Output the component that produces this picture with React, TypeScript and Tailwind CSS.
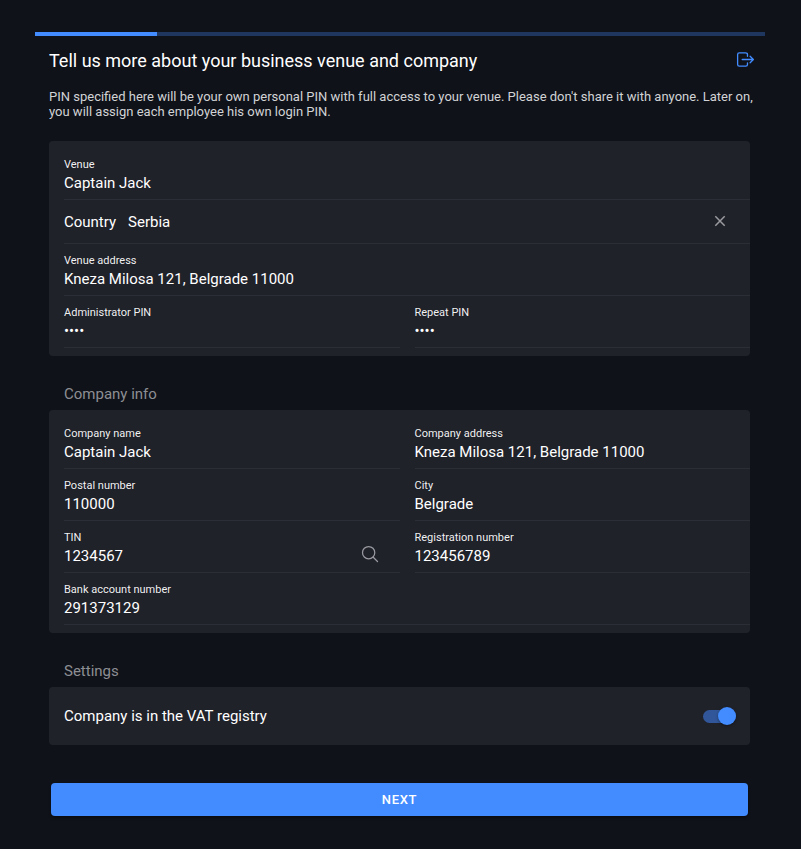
import { useId, useState, type ReactNode } from "react";
import { IoLogOutOutline, IoSearchOutline } from "react-icons/io5";

const STEP = 1;
const TOTAL_STEPS = 6;

interface FieldProps {
  label: string;
  defaultValue: string;
  type?: "text" | "password";
  wide?: boolean;
  action?: ReactNode;
}

function Field({ label, defaultValue, type = "text", wide, action }: FieldProps) {
  const id = useId();

  return (
    <div className={wide ? "col-span-2 pl-[15px]" : "pl-[15px]"}>
      <div className="flex items-end border-b border-[#2b2e36] pt-[9px] pb-1.5">
        <div className="min-w-0 flex-1">
          <label htmlFor={id} className="block text-[11px] leading-4 text-white/95">
            {label}
          </label>
          <input
            id={id}
            type={type}
            defaultValue={defaultValue}
            className="block h-5 w-full bg-transparent text-[15px] leading-5 text-white outline-none"
          />
        </div>
        {action}
      </div>
    </div>
  );
}

function CountryField() {
  const id = useId();
  const [country, setCountry] = useState("Serbia");

  return (
    <div className="col-span-2 pl-[15px]">
      <div className="flex h-11 items-center border-b border-[#2b2e36]">
        <label htmlFor={id} className="text-[15px] leading-5">
          Country
        </label>
        <select
          id={id}
          value={country}
          onChange={(e) => setCountry(e.target.value)}
          className="ml-3 min-w-0 flex-1 appearance-none bg-transparent text-[15px] leading-5 outline-none"
        >
          <option value="" />
          <option value="Serbia">Serbia</option>
        </select>
        <button
          type="button"
          aria-label="Clear country"
          onClick={() => setCountry("")}
          className="mr-5 pb-0.5 text-[#9a9ba0]"
        >
          <svg width="20" height="20" viewBox="0 0 20 20" fill="none" stroke="currentColor" strokeWidth="1.5">
            <path d="M5.3 5.3l9.4 9.4M14.7 5.3l-9.4 9.4" />
          </svg>
        </button>
      </div>
    </div>
  );
}

function Card({ children }: { children: ReactNode }) {
  return <div className="grid grid-cols-2 rounded-[4px] bg-[#20222a] pt-[7px] pb-2">{children}</div>;
}

function SectionTitle({ children }: { children: ReactNode }) {
  return <h2 className="px-[15px] pt-7 pb-1.5 text-[15px] leading-5 text-[#8d8e93]">{children}</h2>;
}

export default function App() {
  const [inVat, setInVat] = useState(true);

  return (
    <main className="min-h-screen bg-[#0f1219] pt-8 pr-9 pb-8 pl-[35px] font-['Roboto',sans-serif] text-white">
      <div
        role="progressbar"
        aria-label="Setup progress"
        aria-valuenow={STEP}
        aria-valuemax={TOTAL_STEPS}
        className="h-1 bg-[#1f375f]"
      >
        <div className="h-full bg-[#428cff]" style={{ width: `${(STEP / TOTAL_STEPS) * 100}%` }} />
      </div>

      <form className="pr-[15px] pl-3.5" onSubmit={(e) => e.preventDefault()}>
        <header className="flex items-start justify-between pt-[13px]">
          <h1 className="text-lg leading-6">Tell us more about your business venue and company</h1>
          <button type="button" aria-label="Log out" className="-mr-1.5 text-[#428cff]">
            <IoLogOutOutline size={21} />
          </button>
        </header>

        <p className="mt-4 -mr-[15px] mb-[22px] text-[13px] leading-[15px] text-[#d2d3d5]">
          PIN specified here will be your own personal PIN with full access to your venue. Please
          don't share it with anyone. Later on, you will assign each employee his own login PIN.
        </p>

        <Card>
          <Field wide label="Venue" defaultValue="Captain Jack" />
          <CountryField />
          <Field wide label="Venue address" defaultValue="Kneza Milosa 121, Belgrade 11000" />
          <Field type="password" label="Administrator PIN" defaultValue="1234" />
          <Field type="password" label="Repeat PIN" defaultValue="1234" />
        </Card>

        <SectionTitle>Company info</SectionTitle>
        <Card>
          <Field label="Company name" defaultValue="Captain Jack" />
          <Field label="Company address" defaultValue="Kneza Milosa 121, Belgrade 11000" />
          <Field label="Postal number" defaultValue="110000" />
          <Field label="City" defaultValue="Belgrade" />
          <Field
            label="TIN"
            defaultValue="1234567"
            action={
              <button type="button" aria-label="Look up TIN" className="mr-5 mb-0.5 text-[#9a9ba0]">
                <IoSearchOutline size={20} />
              </button>
            }
          />
          <Field label="Registration number" defaultValue="123456789" />
          <Field wide label="Bank account number" defaultValue="291373129" />
        </Card>

        <SectionTitle>Settings</SectionTitle>
        <label className="flex items-center justify-between rounded-[4px] bg-[#20222a] py-[19px] pr-3.5 pl-[15px]">
          <span className="text-[15px] leading-5">Company is in the VAT registry</span>
          <input
            type="checkbox"
            role="switch"
            checked={inVat}
            onChange={(e) => setInVat(e.target.checked)}
            className="peer sr-only"
          />
          <span className="flex h-[13px] w-[33px] items-center rounded-full bg-white/20 peer-checked:justify-end peer-checked:bg-[#31579a] peer-checked:*:bg-[#428cff]">
            <span className="size-[18px] shrink-0 rounded-full bg-white shadow-[0_1px_3px_rgba(0,0,0,0.4)]" />
          </span>
        </label>

        <div className="px-0.5 pt-[38px]">
          <button
            type="submit"
            className="block h-[33px] w-full rounded-[4px] bg-[#428cff] text-[13px] leading-4 font-medium tracking-wider uppercase shadow-[0_2px_3px_rgba(0,0,0,0.4)]"
          >
            Next
          </button>
        </div>
      </form>
    </main>
  );
}
